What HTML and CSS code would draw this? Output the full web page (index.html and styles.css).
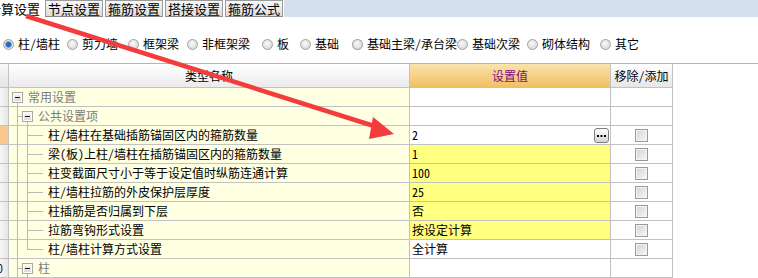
FILE: index.html
```html
<!DOCTYPE html>
<html lang="zh">
<head>
<meta charset="utf-8">
<title>设置</title>
<link rel="stylesheet" href="styles.css">
</head>
<body>
<div class="tabs">
  <div class="tab-active"><span>计算设置</span></div>
  <div class="tab">节点设置</div>
  <div class="tab">箍筋设置</div>
  <div class="tab">搭接设置</div>
  <div class="tab">箍筋公式</div>
  <div class="tab-fill"></div>
</div>

<div class="radios">
  <label class="opt o1"><span class="r on"></span>柱/墙柱</label>
  <label class="opt o2"><span class="r"></span>剪力墙</label>
  <label class="opt o3"><span class="r"></span>框架梁</label>
  <label class="opt o4"><span class="r"></span>非框架梁</label>
  <label class="opt o5"><span class="r"></span>板</label>
  <label class="opt o6"><span class="r"></span>基础</label>
  <label class="opt o7"><span class="r"></span>基础主梁/承台梁</label>
  <label class="opt o8"><span class="r"></span>基础次梁</label>
  <label class="opt o9"><span class="r"></span>砌体结构</label>
  <label class="opt o10"><span class="r"></span>其它</label>
</div>

<div class="grid">
  <div class="row hdr">
    <div class="c rh"></div>
    <div class="c nm">类型名称</div>
    <div class="c val">设置值</div>
    <div class="c rm">移除/添加</div>
  </div>

  <div class="row">
    <div class="c rh"></div>
    <div class="c nm root"><span class="box"></span><span class="grp">常用设置</span></div>
    <div class="c val"></div>
    <div class="c rm"></div>
  </div>

  <div class="row">
    <div class="c rh"></div>
    <div class="c nm group open"><span class="box"></span><span class="grp">公共设置项</span></div>
    <div class="c val"></div>
    <div class="c rm"></div>
  </div>

  <div class="row">
    <div class="c rh cur"></div>
    <div class="c nm leaf">柱/墙柱在基础插筋锚固区内的箍筋数量</div>
    <div class="c val edit"><span>2</span><span class="dots"><svg width="13" height="13" viewBox="0 0 13 13"><rect x="2" y="6" width="2" height="2" fill="#000"/><rect x="5.5" y="6" width="2" height="2" fill="#000"/><rect x="9" y="6" width="2" height="2" fill="#000"/></svg></span></div>
    <div class="c rm"><span class="chk"></span></div>
  </div>

  <div class="row">
    <div class="c rh"></div>
    <div class="c nm leaf">梁(板)上柱/墙柱在插筋锚固区内的箍筋数量</div>
    <div class="c val yel">1</div>
    <div class="c rm"><span class="chk"></span></div>
  </div>

  <div class="row">
    <div class="c rh"></div>
    <div class="c nm leaf">柱变截面尺寸小于等于设定值时纵筋连通计算</div>
    <div class="c val yel">100</div>
    <div class="c rm"><span class="chk"></span></div>
  </div>

  <div class="row">
    <div class="c rh"></div>
    <div class="c nm leaf">柱/墙柱拉筋的外皮保护层厚度</div>
    <div class="c val yel">25</div>
    <div class="c rm"><span class="chk"></span></div>
  </div>

  <div class="row">
    <div class="c rh"></div>
    <div class="c nm leaf">柱插筋是否归属到下层</div>
    <div class="c val yel">否</div>
    <div class="c rm"><span class="chk"></span></div>
  </div>

  <div class="row">
    <div class="c rh"></div>
    <div class="c nm leaf">拉筋弯钩形式设置</div>
    <div class="c val yel">按设定计算</div>
    <div class="c rm"><span class="chk"></span></div>
  </div>

  <div class="row">
    <div class="c rh"></div>
    <div class="c nm leaf last">柱/墙柱计算方式设置</div>
    <div class="c val">全计算</div>
    <div class="c rm"><span class="chk"></span></div>
  </div>

  <div class="row">
    <div class="c rh"><span class="num">0</span></div>
    <div class="c nm group open"><span class="box"></span><span class="grp">柱</span></div>
    <div class="c val"></div>
    <div class="c rm"></div>
  </div>
</div>

<svg class="arrow" width="758" height="278" viewBox="0 0 758 278" aria-hidden="true">
  <line x1="26" y1="16" x2="374" y2="126" stroke="#f33d3d" stroke-width="4.6" stroke-linecap="butt"/>
  <polygon points="373,117 394,134 369,139" fill="#f33d3d"/>
</svg>
</body>
</html>
```

FILE: styles.css
```css
* { box-sizing: border-box; }

body {
  margin: 0;
  width: 758px;
  height: 278px;
  overflow: hidden;
  position: relative;
  background: #fff;
  color: #000;
  font-family: "Noto Sans CJK SC", "Noto Sans", sans-serif;
  font-size: 12px;
  font-feature-settings: "hwid" 1;
}

/* ---------- tabs ---------- */
.tabs {
  display: flex;
  height: 18px;
  overflow: hidden;
}
.tab-active {
  width: 43px;
  height: 18px;
  overflow: hidden;
  white-space: nowrap;
  font-size: 13px;
  line-height: 17px;
}
.tab-active span { display: inline-block; margin-left: -12px; }
.tab {
  width: 58px;
  height: 17px;
  margin-left: 2px;
  border: 1px solid #9c9c9c;
  border-bottom-color: #8a8a8a;
  background: linear-gradient(#f7f7f7, #dcdcdc);
  font-size: 13px;
  line-height: 15px;
  text-align: center;
  white-space: nowrap;
}
.tab-fill {
  flex: 1;
  height: 17px;
  margin-left: 1px;
  background: #d4e0ee;
}

/* ---------- radios ---------- */
.radios {
  display: flex;
  align-items: center;
  height: 18px;
  margin: 17px 0 10px 3px;
  white-space: nowrap;
}
.opt {
  display: flex;
  align-items: center;
  line-height: 18px;
}
.opt .r {
  width: 11px;
  height: 11px;
  margin-right: 4px;
  border-radius: 50%;
  border: 1px solid #a4a4a4;
  background: radial-gradient(circle at 45% 40%, #fafafa 0, #e4e4e4 50%, #cfcfcf 100%);
}
.opt .r.on {
  background: radial-gradient(circle, #1a5ea6 0, #2f78c2 2.4px, #8fb8e0 3.2px, #e4e4e4 3.8px, #cdcdcd 100%);
}
.o1 { width: 64px; }
.o2 { width: 61px; }
.o3 { width: 59px; }
.o4 { width: 75px; }
.o5 { width: 38px; }
.o6 { width: 52px; }
.o7 { width: 105px; }
.o8 { width: 70px; }
.o9 { width: 73px; }

/* ---------- grid ---------- */
.grid {
  border-top: 1px solid #b4b4b4;
}
.row {
  display: flex;
  height: 19px;
}
.row.hdr { height: 24px; }

.c {
  border-right: 1px solid #c2c2c2;
  border-bottom: 1px solid #c2c2c2;
  line-height: 18px;
  white-space: nowrap;
  overflow: hidden;
}
.rh {
  width: 9px;
  background: linear-gradient(90deg, #f6f6f6, #e6e6e6);
}
.rh.cur { background: #f8c98a; }
.num { display: inline-block; margin-left: -3px; color: #222; }
.nm {
  width: 401px;
  background-color: #ffffe2;
}
.val {
  width: 201px;
  padding-left: 2px;
  background: #fff;
}
.val.yel { background: #ffff80; }
.rm {
  width: 62px;
  background: #fff;
  display: flex;
  align-items: center;
  justify-content: center;
}

/* header */
.hdr .c { line-height: 23px; text-align: center; }
.hdr .rh { background: linear-gradient(#f8f8f8, #e4e4e4); }
.hdr .nm { background: linear-gradient(#ffffff, #ebebeb); }
.hdr .val {
  padding-left: 0;
  color: #7f0a7f;
  background: linear-gradient(#fbe3ad, #f0c162);
}
.hdr .rm { display: block; background: linear-gradient(#ffffff, #e6e6e6); }

/* tree */
.nm.root, .nm.group {
  display: flex;
  align-items: center;
}
.box {
  flex: none;
  width: 11px;
  height: 11px;
  border: 1px solid #a8a8a8;
  background:
    linear-gradient(#111, #111) center / 5px 1px no-repeat,
    linear-gradient(#f6f6f6, #d9d9d9) center / 7px 7px no-repeat,
    #fff;
}
.grp {
  margin-left: 5px;
  color: #7c7c7c;
}
.nm.root {
  padding-left: 3px;
  background:
    linear-gradient(#b9b9b9, #b9b9b9) 8px 14px / 1px 5px no-repeat,
    #ffffe2;
}
.nm.group {
  padding-left: 13px;
  background:
    linear-gradient(#b9b9b9, #b9b9b9) 8px 0 / 1px 100% no-repeat,
    linear-gradient(#b9b9b9, #b9b9b9) 8px 9px / 5px 1px no-repeat,
    linear-gradient(#b9b9b9, #b9b9b9) 18px 14px / 1px 5px no-repeat,
    #ffffe2;
}
.nm.leaf {
  padding-left: 39px;
  background:
    linear-gradient(#b9b9b9, #b9b9b9) 8px 0 / 1px 100% no-repeat,
    linear-gradient(#b9b9b9, #b9b9b9) 18px 0 / 1px 100% no-repeat,
    linear-gradient(#b9b9b9, #b9b9b9) 18px 9px / 16px 1px no-repeat,
    #ffffe2;
}
.nm.leaf.last {
  background:
    linear-gradient(#b9b9b9, #b9b9b9) 8px 0 / 1px 100% no-repeat,
    linear-gradient(#b9b9b9, #b9b9b9) 18px 0 / 1px 10px no-repeat,
    linear-gradient(#b9b9b9, #b9b9b9) 18px 9px / 16px 1px no-repeat,
    #ffffe2;
}

/* value editor */
.val.edit {
  display: flex;
  align-items: center;
  justify-content: space-between;
}
.dots {
  display: flex;
  width: 15px;
  height: 15px;
  margin-right: 1px;
  border: 1px solid #7e7e7e;
  border-radius: 3px;
  background: linear-gradient(#ffffff, #d4d4d4);
}

.chk {
  width: 13px;
  height: 13px;
  border: 1px solid #9a9a9a;
  background: linear-gradient(135deg, #d2d2d2, #f8f8f8);
  box-shadow: inset 0 0 0 1px #f4f4f4;
}

/* annotation arrow */
.arrow {
  position: absolute;
  left: 0;
  top: 0;
  pointer-events: none;
}
```
